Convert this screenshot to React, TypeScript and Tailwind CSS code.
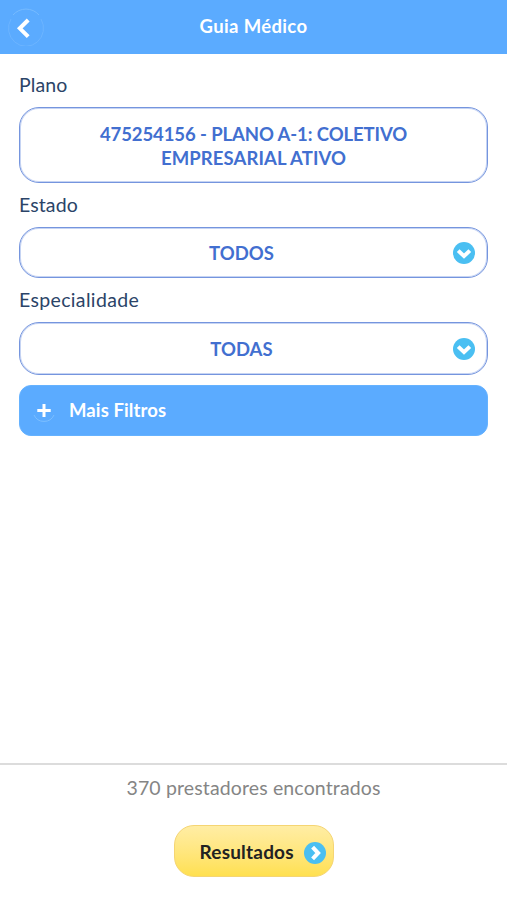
import React from "react";

interface FieldProps {
  label: string;
  labelClass: string;
  boxClass: string;
  select?: boolean;
  children: React.ReactNode;
}

const Arrow = ({ className = "" }: { className?: string }) => (
  <svg viewBox="0 0 22 22" className={`h-[22px] w-[22px] ${className}`}>
    <circle cx="11" cy="11" r="11" fill="#4abff2" />
    <path
      d="M5.2 8.6L11 14.1L16.8 8.6"
      fill="none"
      stroke="#fff"
      strokeWidth="4"
    />
  </svg>
);

const Field = ({
  label,
  labelClass,
  boxClass,
  select,
  children,
}: FieldProps) => (
  <div>
    <div className="flex h-11 items-center text-[19.5px] text-[#2b4468]">
      <span className={labelClass}>{label}</span>
    </div>
    <div
      className={`relative flex w-full items-center justify-center rounded-[20px] border border-[#7595de] text-center text-[18.5px] leading-[24.5px] font-bold text-[#426fd0] shadow-[inset_0_0_0_1px_#c6d4f3] ${boxClass}`}
    >
      <div>{children}</div>
      {select && <Arrow className="absolute right-3" />}
    </div>
  </div>
);

const App = () => {
  return (
    <div className="flex h-[900px] w-full flex-col bg-white font-['Lato',sans-serif]">
      <header className="relative flex h-[54px] shrink-0 items-center justify-center bg-[#5babff]">
        <button className="absolute left-2 top-2">
          <svg viewBox="0 0 36 38" className="h-[38px] w-9" fill="none">
            <path d="M5 7A17.5 18 0 0 1 31 7" stroke="#76bbff" />
            <path d="M33 11A17.5 18 0 1 1 3 11" stroke="#6cb4ff" />
            <path d="M20.2 12L11.8 20.3L20.2 28.6" stroke="#fff" strokeWidth="4" />
          </svg>
        </button>
        <h1 className="text-[18.5px] font-bold tracking-[0.35px] text-white">
          Guia Médico
        </h1>
      </header>

      <main className="flex-1 px-[19px] pt-[9px]">
        <Field
          label="Plano"
          labelClass="tracking-[0.1px]"
          boxClass="h-[76px] pt-0.5"
        >
          <p className="tracking-[-0.1px]">475254156 - PLANO A-1: COLETIVO</p>
          <p className="tracking-[0.1px]">EMPRESARIAL ATIVO</p>
        </Field>
        <Field
          label="Estado"
          labelClass="tracking-[0.1px]"
          boxClass="h-[51px] pt-px pr-6"
          select
        >
          TODOS
        </Field>
        <Field
          label="Especialidade"
          labelClass="tracking-[0.35px]"
          boxClass="h-[53px] pt-px pr-6"
          select
        >
          TODAS
        </Field>
        <button className="mt-2.5 flex h-[51px] w-full items-center rounded-xl border border-[#65b2ff] bg-[#5babff] pl-3 text-[18.5px] font-bold text-white">
          <svg viewBox="0 0 24 24" className="mr-[13px] h-6 w-6" fill="none">
            <path d="M2 16A11 11 0 0 0 22 16" stroke="#7cbfff" />
            <path d="M12 5V18M5.3 11.5H18.7" stroke="#fff" strokeWidth="3" />
          </svg>
          <span className="tracking-[0.1px]">Mais Filtros</span>
        </button>
      </main>

      <footer className="flex h-[137px] shrink-0 flex-col items-center border-t-2 border-[#dcdcdc]">
        <p className="mt-[9px] mb-px text-[19.5px] leading-7 tracking-[0.13px] text-[#858585]">
          370 prestadores encontrados
        </p>
        <button className="mt-[22px] flex h-[52px] w-[160px] items-center justify-between rounded-[20px] border border-[#f5d573] bg-linear-to-b from-[#ffeda4] to-[#ffe04f] pt-[3px] pl-[25px] pr-[7px] text-[19px] font-bold text-[#222]">
          <span className="tracking-[0.2px]">Resultados</span>
          <Arrow className="-rotate-90" />
        </button>
      </footer>
    </div>
  );
};

export default App;
